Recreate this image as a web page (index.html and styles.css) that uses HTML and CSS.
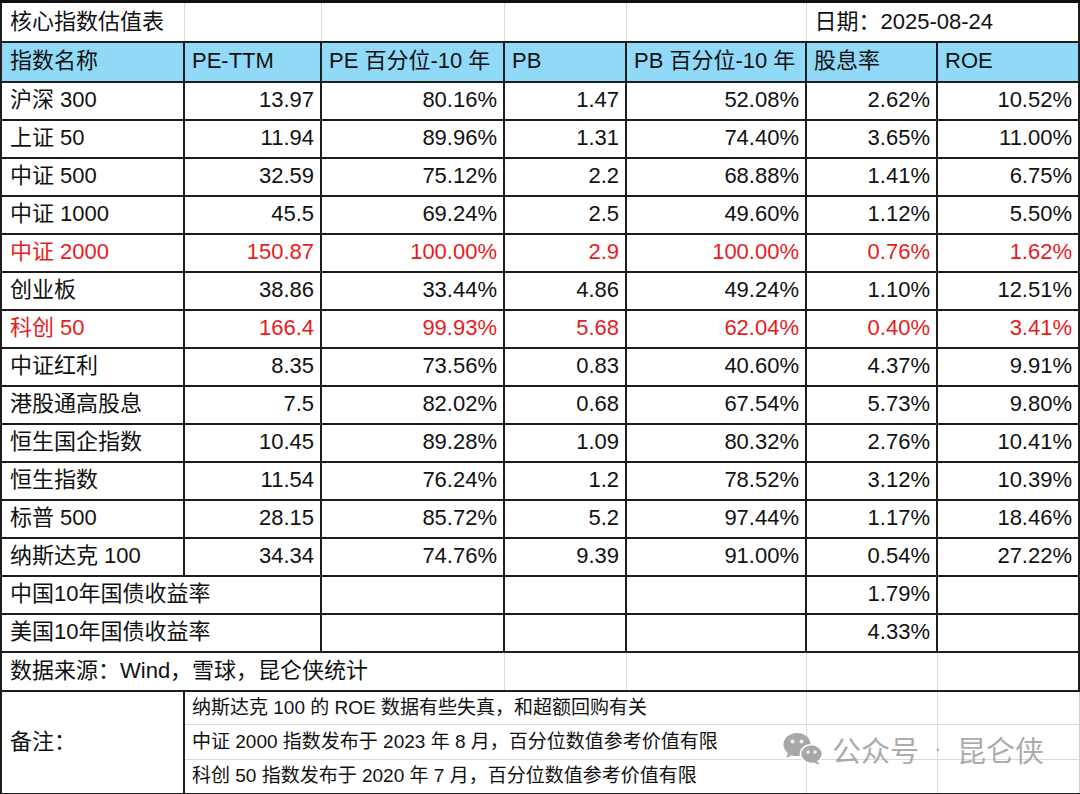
FILE: index.html
```html
<!DOCTYPE html>
<html lang="zh-CN">
<head>
<meta charset="utf-8">
<title>核心指数估值表</title>
<link rel="stylesheet" href="styles.css">
</head>
<body>
<div class="page">
<table class="sheet">
  <colgroup>
    <col class="c1"><col class="c2"><col class="c3"><col class="c4"><col class="c5"><col class="c6"><col class="c7">
  </colgroup>
  <tbody>
    <tr class="title-row">
      <td class="g first">核心指数估值表</td>
      <td class="g"></td>
      <td class="g"></td>
      <td class="g"></td>
      <td class="g"></td>
      <td class="g last" colspan="2">日期：2025-08-24</td>
    </tr>
    <tr class="head-row">
      <td>指数名称</td><td>PE-TTM</td><td>PE 百分位-10 年</td><td>PB</td><td>PB 百分位-10 年</td><td>股息率</td><td>ROE</td>
    </tr>
    <tr class="data"><td class="name">沪深 300</td><td>13.97</td><td>80.16%</td><td>1.47</td><td>52.08%</td><td>2.62%</td><td>10.52%</td></tr>
    <tr class="data"><td class="name">上证 50</td><td>11.94</td><td>89.96%</td><td>1.31</td><td>74.40%</td><td>3.65%</td><td>11.00%</td></tr>
    <tr class="data"><td class="name">中证 500</td><td>32.59</td><td>75.12%</td><td>2.2</td><td>68.88%</td><td>1.41%</td><td>6.75%</td></tr>
    <tr class="data"><td class="name">中证 1000</td><td>45.5</td><td>69.24%</td><td>2.5</td><td>49.60%</td><td>1.12%</td><td>5.50%</td></tr>
    <tr class="data red"><td class="name">中证 2000</td><td>150.87</td><td>100.00%</td><td>2.9</td><td>100.00%</td><td>0.76%</td><td>1.62%</td></tr>
    <tr class="data"><td class="name">创业板</td><td>38.86</td><td>33.44%</td><td>4.86</td><td>49.24%</td><td>1.10%</td><td>12.51%</td></tr>
    <tr class="data red"><td class="name">科创 50</td><td>166.4</td><td>99.93%</td><td>5.68</td><td>62.04%</td><td>0.40%</td><td>3.41%</td></tr>
    <tr class="data"><td class="name">中证红利</td><td>8.35</td><td>73.56%</td><td>0.83</td><td>40.60%</td><td>4.37%</td><td>9.91%</td></tr>
    <tr class="data"><td class="name">港股通高股息</td><td>7.5</td><td>82.02%</td><td>0.68</td><td>67.54%</td><td>5.73%</td><td>9.80%</td></tr>
    <tr class="data"><td class="name">恒生国企指数</td><td>10.45</td><td>89.28%</td><td>1.09</td><td>80.32%</td><td>2.76%</td><td>10.41%</td></tr>
    <tr class="data"><td class="name">恒生指数</td><td>11.54</td><td>76.24%</td><td>1.2</td><td>78.52%</td><td>3.12%</td><td>10.39%</td></tr>
    <tr class="data"><td class="name">标普 500</td><td>28.15</td><td>85.72%</td><td>5.2</td><td>97.44%</td><td>1.17%</td><td>18.46%</td></tr>
    <tr class="data"><td class="name">纳斯达克 100</td><td>34.34</td><td>74.76%</td><td>9.39</td><td>91.00%</td><td>0.54%</td><td>27.22%</td></tr>
    <tr class="data"><td class="name" colspan="2">中国10年国债收益率</td><td></td><td></td><td></td><td>1.79%</td><td></td></tr>
    <tr class="data"><td class="name" colspan="2">美国10年国债收益率</td><td></td><td></td><td></td><td>4.33%</td><td></td></tr>
    <tr class="source-row">
      <td class="name src" colspan="3">数据来源：Wind，雪球，昆仑侠统计</td>
      <td class="g"></td><td class="g"></td><td class="g"></td><td class="g last"></td>
    </tr>
    <tr class="note-row note-top">
      <td class="note-label" rowspan="3">备注：</td>
      <td class="g note" colspan="4">纳斯达克 100 的 ROE 数据有些失真，和超额回购有关</td>
      <td class="g"></td><td class="g edge"></td>
    </tr>
    <tr class="note-row">
      <td class="g note" colspan="4">中证 2000 指数发布于 2023 年 8 月，百分位数值参考价值有限</td>
      <td class="g"></td><td class="g edge"></td>
    </tr>
    <tr class="note-row note-bottom">
      <td class="g note" colspan="4">科创 50 指数发布于 2020 年 7 月，百分位数值参考价值有限</td>
      <td class="g"></td><td class="g edge"></td>
    </tr>
  </tbody>
</table>
<div class="watermark">
  <svg class="wm-icon" viewBox="0 0 40 34" width="40" height="34" aria-hidden="true">
    <ellipse cx="14" cy="12.5" rx="13.5" ry="11.5" fill="#a4a4a4"/>
    <path d="M5 20 L3.5 26 L10 22.5 Z" fill="#a4a4a4"/>
    <circle cx="9.5" cy="9.5" r="2" fill="#f2f2f2"/>
    <circle cx="18.5" cy="9.5" r="2" fill="#f2f2f2"/>
    <ellipse cx="28.5" cy="22" rx="11" ry="9.5" fill="#a4a4a4" stroke="#ffffff" stroke-width="1.6"/>
    <path d="M34 29 L37 33 L30.5 30.5 Z" fill="#a4a4a4"/>
    <circle cx="25" cy="20" r="1.7" fill="#f2f2f2"/>
    <circle cx="32" cy="20" r="1.7" fill="#f2f2f2"/>
  </svg>
  <span class="wm-text">公众号</span><span class="wm-dot">·</span><span class="wm-text">昆仑侠</span>
</div>
</div>
</body>
</html>
```

FILE: styles.css
```css
html, body {
  margin: 0;
  padding: 0;
  background: #ffffff;
}

.page {
  position: relative;
  width: 1080px;
  height: 794px;
  overflow: hidden;
}

.sheet {
  border-collapse: collapse;
  table-layout: fixed;
  width: 1078px;
  font-family: "Liberation Sans", Arial, "Noto Sans CJK SC", sans-serif;
  font-size: 22px;
  line-height: 1.2;
  color: #111111;
}

.c1 { width: 183px; }
.c2 { width: 137px; }
.c3 { width: 183px; }
.c4 { width: 122px; }
.c5 { width: 180px; }
.c6 { width: 131px; }
.c7 { width: 142px; }

.sheet td {
  border: 2px solid #1e1e1e;
  padding: 0 6px 0 8px;
  vertical-align: middle;
  white-space: nowrap;
  overflow: visible;
  text-align: right;
}

.sheet td.g {
  border: 1px solid #dadada;
}

.title-row { height: 40px; }
.title-row td {
  text-align: left;
  padding-left: 8px;
}
.title-row td.g {
  border-top: 3px solid #111111;
}
.title-row td.first { border-left: 2px solid #1e1e1e; }
.title-row td.last { border-right: 2px solid #1e1e1e; }

.head-row { height: 40px; }
.head-row td {
  background: #90d9f7;
  text-align: left;
  padding-left: 7px;
}
.head-row td:first-child { padding-left: 8px; }

.data { height: 38px; }
.data td.name { text-align: left; }

.red td { color: #e81b1d; }

.source-row { height: 39px; }
.source-row td.src {
  text-align: left;
  border-right: 1px solid #dadada;
}
.source-row td.last { border-right: 2px solid #1e1e1e; }

.note-row { height: 34.4px; }
.note-row td.note {
  font-size: 19px;
  text-align: left;
  padding-left: 7px;
}
.note-top td { border-top: 2px solid #1e1e1e !important; }
.note-bottom td { border-bottom: 2px solid #1e1e1e !important; }
.note-label {
  text-align: left !important;
  padding-left: 8px !important;
}
.sheet td.edge { border-right: 1px solid #d0d0d0; }

.watermark {
  position: absolute;
  left: 783px;
  top: 731px;
  display: flex;
  align-items: center;
  font-family: "Noto Sans CJK SC", sans-serif;
  font-size: 29px;
  line-height: 36px;
  color: rgba(150, 150, 150, 0.8);
}

.wm-icon {
  margin-right: 9px;
  opacity: 0.95;
}

.wm-dot {
  width: 38px;
  text-align: center;
  font-family: "Liberation Sans", sans-serif;
  font-size: 22px;
}
```
